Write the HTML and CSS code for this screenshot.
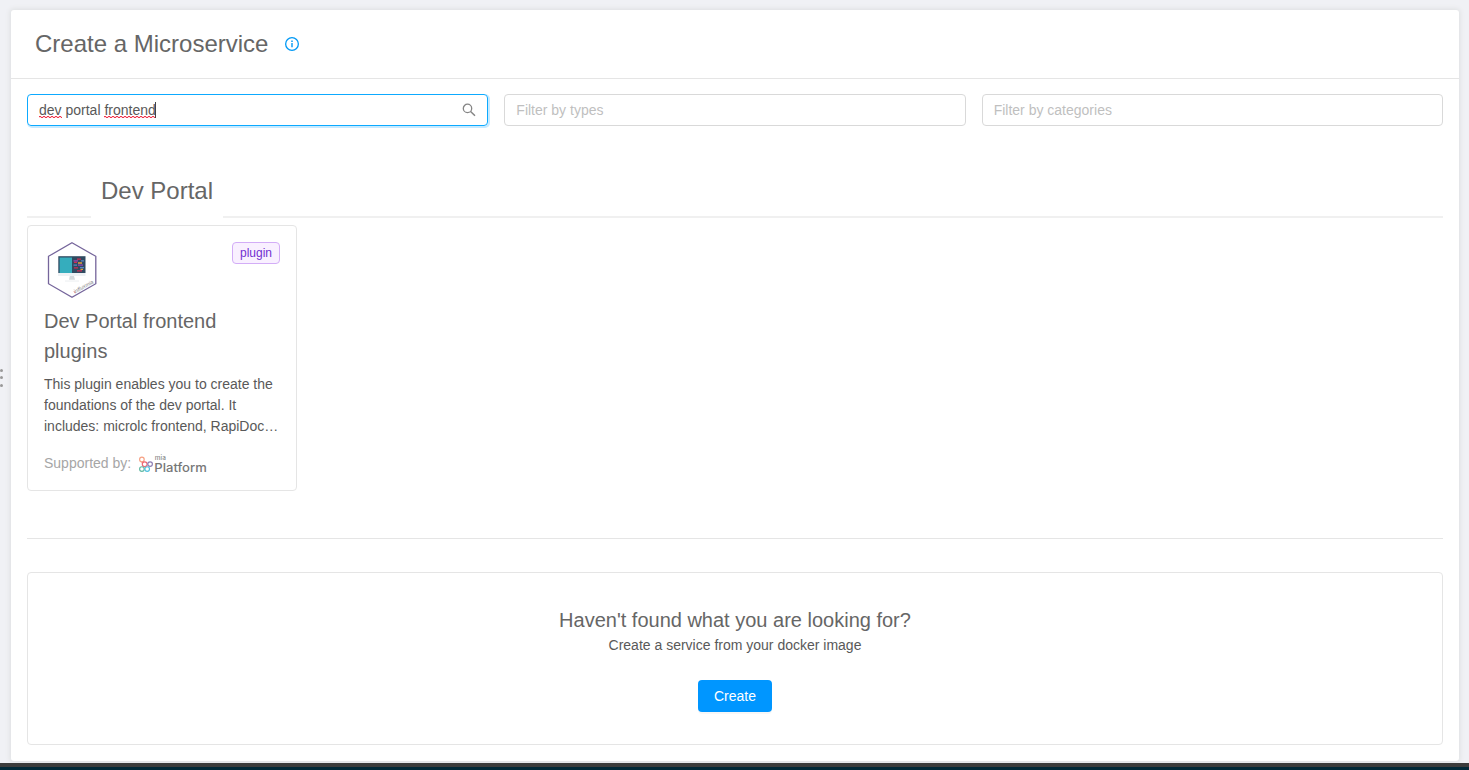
FILE: index.html
```html
<!DOCTYPE html>
<html lang="en">
<head>
<meta charset="utf-8">
<title>Create a Microservice</title>
<link rel="stylesheet" href="styles.css">
</head>
<body>
<div class="drag-handle"><i></i><i></i><i></i></div>
<main class="panel">
  <header class="panel-header">
    <h1>Create a Microservice</h1>
    <svg class="info" viewBox="0 0 14 14" fill="none" stroke="#0099f5"><circle cx="7" cy="7" r="6.35" stroke-width="1.3"/><path d="M7 6V10.3" stroke-width="1.4"/><path d="M7 3.5V5" stroke-width="1.5"/></svg>
  </header>
  <div class="content">
    <div class="filters">
      <div class="field focused">
        <span class="query"><span class="misspelled">dev</span> portal <span class="misspelled">frontend</span></span><span class="caret"></span>
        <svg class="search" viewBox="0 0 14 14" fill="none" stroke="#858585" stroke-width="1.3"><circle cx="5.5" cy="5.4" r="4.2"/><path d="M8.6 8.5L13 12.8" stroke-width="1.5"/></svg>
      </div>
      <div class="field placeholder">Filter by types</div>
      <div class="field placeholder">Filter by categories</div>
    </div>
    <div class="divider-title"><h2>Dev Portal</h2></div>
    <article class="card">
      <div class="card-top">
        <svg class="plugin-logo" viewBox="0 0 56 56">
          <path d="M28 .8L51.8 14.3V41.7L28 55.2L4.5 41.7V14.3Z" fill="#fff" stroke="#75659b" stroke-width="1.3"/>
          <path d="M14.3 14.2H41.5V31H14.3Z" fill="#304a61"/>
          <path d="M15.6 15.5H28V31H15.6Z" fill="#35adbd"/>
          <path d="M14 31H41.5V34H14Z" fill="#edf1f4"/>
          <path d="M25.8 34H30L31 37.7H25Z" fill="#d5dadd"/>
          <path d="M21 38.4H35V39.7H21Z" fill="#f0f2f4"/>
          <g fill="none" stroke-width="1.3">
            <path d="M33 17.2H37M30 20.4H33M30 25.8H34M33 28.8H38" stroke="#d02d52"/>
            <path d="M29.5 18.8H34M34 23.2H39" stroke="#9b43b4"/>
            <path d="M34 21H38M36.5 27.3H39" stroke="#e2a13b"/>
            <path d="M37 18.8H40M29.5 23.2H33M36 25.6H40" stroke="#5685c4"/>
          </g>
          <text class="logo-caption" transform="translate(31 51.5) rotate(-29)">influxmia</text>
          <path d="M30 49.5L31.5 51" stroke="#dc7777"/>
        </svg>
        <span class="tag">plugin</span>
      </div>
      <h3>Dev Portal frontend plugins</h3>
      <p>This plugin enables you to create the<br>foundations of the dev portal. It<br>includes: microlc frontend, RapiDoc…</p>
      <div class="support"><span>Supported by:</span>
        <svg class="mia" viewBox="0 0 70 19" fill="none">
          <g stroke-width="1.15">
            <circle cx="3.9" cy="3.4" r="2.3" stroke="#f6a184"/>
            <path d="M3.6 5.7L4.5 7.4" stroke="#f6a184"/>
            <circle cx="6.7" cy="8.2" r="2.4" stroke="#ef6674"/>
            <circle cx="12.1" cy="8.1" r="2.3" stroke="#8d7eb4"/>
            <circle cx="3.9" cy="13" r="2.3" stroke="#61b9a3"/>
            <circle cx="9.2" cy="13" r="2.3" stroke="#4fc1df"/>
          </g>
          <text class="mia-small" x="16.8" y="4" textLength="11" lengthAdjust="spacingAndGlyphs">mia</text>
          <text class="mia-name" x="16.3" y="15.9" textLength="52.5" lengthAdjust="spacingAndGlyphs">Platform</text>
        </svg>
      </div>
    </article>
    <hr>
    <section class="not-found">
      <h3>Haven't found what you are looking for?</h3>
      <p>Create a service from your docker image</p>
      <button type="button">Create</button>
    </section>
  </div>
</main>
<footer class="bottom-strip"></footer>
</body>
</html>
```
FILE: styles.css
```css
* { box-sizing: border-box; }
body {
  margin: 0;
  height: 770px;
  overflow: hidden;
  padding: 10px 10px 0 11px;
  display: flex;
  flex-direction: column;
  background: #f0f1f5;
  color: #595959;
  font: 14px/21px "Liberation Sans", Arial, sans-serif;
}
h1, h2, h3, p { margin: 0; font-weight: 400; }
h1, h2, h3 { color: #666; }
.panel {
  height: 751px;
  background: #fff;
  border-radius: 3px;
  box-shadow: 0 0 5px 1px #dddfe0;
}
.panel-header {
  height: 69px;
  padding: 0 24px;
  display: flex;
  align-items: center;
  gap: 17px;
  border-bottom: 1px solid #e5e5e5;
}
h1, h2 { font-size: 24px; line-height: 36px; }
.info { width: 14px; height: 14px; }
.content { padding: 15px 16px 0; }
.filters { display: grid; grid-template-columns: repeat(3, 1fr); gap: 16px; }
.field {
  height: 32px;
  padding: 0 11px;
  display: flex;
  align-items: center;
  border: 1px solid #d9d9d9;
  border-radius: 4px;
}
.placeholder { color: #bfbfbf; }
.focused { border-color: #0daaff; box-shadow: 1px 1px 0 1px #c7eaff; }
/* Spell-check squiggle: low dots alternating with high dots, two pixels tall */
.misspelled {
  background:
    repeating-linear-gradient(90deg, #f0344a 0 2px, #f0344a33 2px 4px) 0 14px / 100% 1px no-repeat,
    repeating-linear-gradient(90deg, #f0344a33 0 2px, #f0344a 2px 4px) 0 15px / 100% 1px no-repeat;
}
.caret { width: 1px; height: 16px; background: #444; margin-left: -1px; }
.search { width: 14px; height: 14px; margin-left: auto; }
.divider-title {
  margin-top: 47px;
  height: 45px;
  display: flex;
  align-items: flex-end;
}
.divider-title::before, .divider-title::after { content: ""; height: 2px; background: #f0f0f0; }
.divider-title::before { width: 64px; }
.divider-title::after { flex: 1; }
.divider-title h2 { width: 132px; height: 45px; text-align: center; }
.card {
  width: 270px;
  height: 266px;
  margin-top: 7px;
  padding: 16px;
  border: 1px solid #e5e5e5;
  border-radius: 4px;
}
.card-top { height: 56px; display: flex; justify-content: space-between; }
.plugin-logo { width: 56px; height: 56px; }
.logo-caption { font: italic 5.5px "Liberation Sans", sans-serif; fill: #858585; }
.tag {
  height: 22px;
  padding: 0 7px;
  color: #722ed1;
  background: #f9f0ff;
  border: 1px solid #d3adf7;
  border-radius: 4px;
  font-size: 12px;
  line-height: 20px;
}
.card h3 { margin-top: 8px; font-size: 20px; line-height: 30px; }
.card p { margin-top: 8px; white-space: nowrap; }
.support { margin-top: 16px; display: flex; gap: 7px; color: #a6a6a6; }
.mia { width: 70px; height: 19px; margin-top: 3px; overflow: visible; }
.mia-small { font: 500 6px Inter, sans-serif; fill: #888; }
.mia-name { font: 500 12px Inter, sans-serif; fill: #777; }
hr { height: 1px; border: 0; margin: 47px 0 33px; background: #e5e5e5; }
.not-found {
  height: 173px;
  padding-top: 32px;
  display: flex;
  flex-direction: column;
  align-items: center;
  border: 1px solid #e5e5e5;
  border-radius: 4px;
}
.not-found h3 { font-size: 20px; line-height: 30px; }
button {
  width: 74px;
  height: 32px;
  margin-top: 24px;
  padding: 0;
  border: 0;
  border-radius: 4px;
  background: #0096ff;
  box-shadow: 0 2px 0 #00000008;
  color: #fff;
  font: inherit;
}
.bottom-strip {
  height: 7px;
  margin: 2px -10px 0 -11px;
  background: #022938;
  border-top: 4px solid #3c3c3c;
}
.drag-handle {
  position: absolute;
  left: .4px;
  top: 368.8px;
  display: grid;
  gap: 4.5px;
}
.drag-handle i { width: 3px; height: 3px; border-radius: 50%; background: #999; }
```
